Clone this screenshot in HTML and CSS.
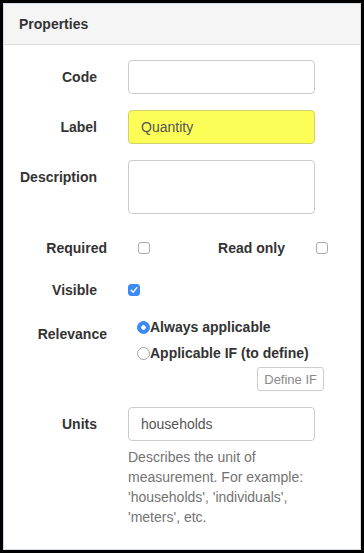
FILE: index.html
```html
<!DOCTYPE html>
<html>
<head>
    <title>Properties</title>
    <link rel="stylesheet" href="styles.css">
</head>
<body>
    <div class="panel">
        <div class="panel-heading">Properties</div>
        <div class="panel-body">
            <div class="form-row">
                <label class="lbl">Code</label>
                <input class="form-control" type="text" value="">
            </div>
            <div class="form-row">
                <label class="lbl">Label</label>
                <input class="form-control highlight" type="text" value="Quantity">
            </div>
            <div class="form-row">
                <label class="lbl">Description</label>
                <textarea class="form-control area"></textarea>
            </div>
            <div class="form-row check-row">
                <label class="lbl wide">Required</label>
                <span class="box"></span>
                <label class="lbl readonly">Read only</label>
                <span class="box"></span>
            </div>
            <div class="form-row check-row visible-row">
                <label class="lbl">Visible</label>
                <span class="box checked">
                    <svg width="8" height="8" viewBox="0 0 8 8"><path d="M1.2 4.2 L3.2 6.2 L6.8 1.6" fill="none" stroke="#fff" stroke-width="1.4" stroke-linecap="round" stroke-linejoin="round"/></svg>
                </span>
            </div>
            <div class="form-row">
                <label class="lbl wide">Relevance</label>
                <div class="radios">
                    <div class="radio"><span class="dot on"></span>Always applicable</div>
                    <div class="radio second"><span class="dot"></span>Applicable IF (to define)</div>
                    <div class="btn-line"><button class="btn">Define IF</button></div>
                </div>
            </div>
            <div class="form-row units">
                <label class="lbl">Units</label>
                <div class="ctrl">
                    <input class="form-control" type="text" value="households">
                    <p class="help">Describes the unit of measurement. For example: 'households', 'individuals', 'meters', etc.</p>
                </div>
            </div>
        </div>
    </div>
</body>
</html>
```

FILE: styles.css
```css
html, body {
    margin: 0;
    padding: 0;
}
body {
    background: #000;
    width: 364px;
    height: 553px;
    font-family: "Liberation Sans", Arial, sans-serif;
    font-size: 14px;
    line-height: 20px;
    color: #333;
    padding: 3px 3px 3px 3px;
    box-sizing: border-box;
}
.panel {
    background: #fff;
    border: 1px solid #d4dbe5;
    border-right-color: #dcdcdc;
    width: 358px;
    height: 547px;
    box-sizing: border-box;
}
.panel-heading {
    background: #f5f5f5;
    border-bottom: 1px solid #dddddd;
    padding: 10px 15px;
    font-weight: bold;
}
.panel-body {
    padding-top: 15px;
}
.form-row {
    display: flex;
    align-items: flex-start;
    margin-bottom: 16px;
}
.lbl {
    width: 93px;
    text-align: right;
    font-weight: bold;
    padding-top: 7px;
    flex-shrink: 0;
}
.lbl.wide {
    width: 103px;
}
.form-control {
    display: block;
    margin: 0 0 0 31px;
    width: 187px;
    height: 34px;
    box-sizing: border-box;
    border: 1px solid #cccccc;
    border-radius: 4px;
    padding: 6px 12px;
    font-family: inherit;
    font-size: 14px;
    color: #555;
    background: #fff;
}
.form-control.highlight {
    background: #fdfd58;
    border-color: #d2d26a;
}
.form-control.area {
    height: 54px;
    resize: none;
}
.check-row {
    height: 36px;
    align-items: center;
    margin-bottom: 6px;
}
.check-row .lbl {
    padding-top: 0;
}
.visible-row {
    margin-bottom: 9px;
}
.lbl.readonly {
    width: 135px;
}
.box {
    display: flex;
    align-items: center;
    justify-content: center;
    width: 12px;
    height: 12px;
    box-sizing: border-box;
    border: 1px solid #a9a9a9;
    border-radius: 3px;
    margin-left: 31px;
    background: #fff;
    flex-shrink: 0;
}
.box.checked {
    background: #3b8af6;
    border-color: #3b8af6;
}
.radios {
    margin-left: 30px;
    width: 187px;
    font-weight: bold;
}
.radio {
    display: flex;
    align-items: center;
}
.radio.second {
    margin-top: 6px;
}
.dot {
    width: 13px;
    height: 13px;
    box-sizing: border-box;
    border: 1px solid #a5a5a5;
    border-radius: 50%;
    background: #fff;
    flex-shrink: 0;
}
.dot.on {
    background: #3b8af6 radial-gradient(circle, #fff 0, #fff 2px, transparent 2.5px);
    border-color: #3b8af6;
}
.btn-line {
    display: flex;
    justify-content: flex-end;
    margin-top: 4px;
}
.btn {
    height: 24px;
    padding: 0 6px;
    border: 1px solid #cccccc;
    border-radius: 3px;
    background: #fff;
    color: #8a8a8a;
    font-family: inherit;
    font-size: 13px;
}
.ctrl .form-control {
    margin-left: 31px;
}
.help {
    margin: 6px 0 0 31px;
    width: 187px;
    color: #737373;
}
```
